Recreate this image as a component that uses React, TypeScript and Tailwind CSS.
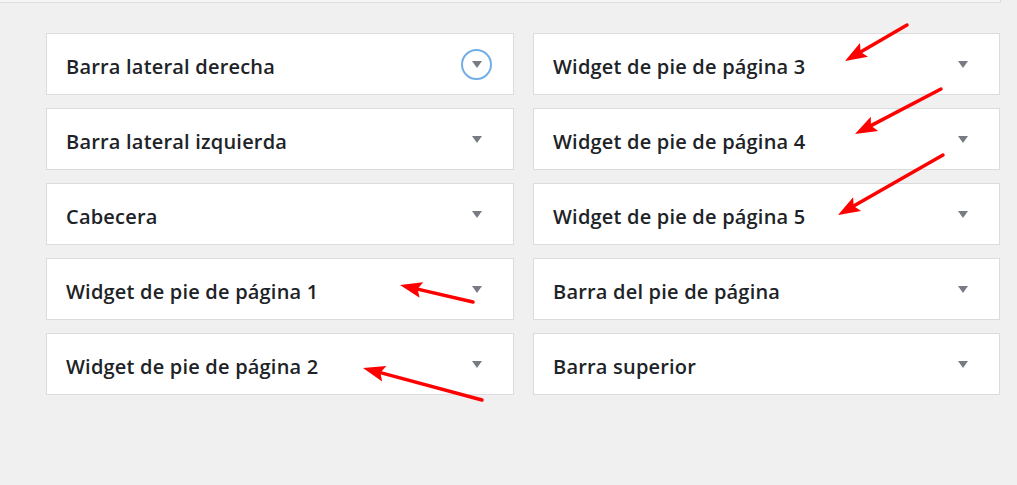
import React from "react";

const left = [
  "Barra lateral derecha",
  "Barra lateral izquierda",
  "Cabecera",
  "Widget de pie de página 1",
  "Widget de pie de página 2",
];
const right = [
  "Widget de pie de página 3",
  "Widget de pie de página 4",
  "Widget de pie de página 5",
  "Barra del pie de página",
  "Barra superior",
];

function Tri() {
  return (
    <svg width="10" height="7" viewBox="0 0 10 7" className="block">
      <path d="M0 0 L10 0 L5 7 Z" fill="#787c82" />
    </svg>
  );
}

function Card({ title, focus }: { title: string; focus?: boolean }) {
  return (
    <div className="h-[62px] bg-white border border-[#dcdcde] flex items-center justify-between pl-[19px] pr-[29px]">
      <span
        className="pt-[5px] text-[20px] font-semibold text-[#1d2327] tracking-[0.2px]"
        style={{ fontFamily: '"Open Sans", "Noto Sans", sans-serif' }}
      >
        {title}
      </span>
      <div className="w-[15px] flex justify-center">
        {focus ? (
          <div className="shrink-0 w-[31px] h-[31px] rounded-full border-2 border-[#72aee6] flex items-center justify-center">
            <Tri />
          </div>
        ) : (
          <Tri />
        )}
      </div>
    </div>
  );
}

const arrows: [number, number, number, number][] = [
  [907, 25, 845, 61],
  [941, 89, 855, 134],
  [943, 155, 838, 215],
  [473, 302, 400, 285],
  [482, 400, 363, 368],
];

function Arrow({ a }: { a: [number, number, number, number] }) {
  const [x1, y1, x2, y2] = a;
  const dx = x2 - x1;
  const dy = y2 - y1;
  const len = Math.hypot(dx, dy);
  const ux = dx / len;
  const uy = dy / len;
  const hl = 22;
  const hw = 8;
  const bx = x2 - ux * hl;
  const by = y2 - uy * hl;
  const px = -uy;
  const py = ux;
  const pts = `${x2},${y2} ${bx + px * hw},${by + py * hw} ${bx + ux * 4},${by + uy * 4} ${bx - px * hw},${by - py * hw}`;
  return (
    <g>
      <line x1={x1} y1={y1} x2={bx + ux * 4} y2={by + uy * 4} stroke="#ff0000" strokeWidth="3.5" strokeLinecap="round" />
      <polygon points={pts} fill="#ff0000" />
    </g>
  );
}

export default function App() {
  return (
    <div className="relative w-[1017px] h-[485px] bg-[#f0f0f0] overflow-hidden">
      <div className="w-[1001px] h-[3px] bg-[#f5f5f5] border-b border-r border-[#dedede]" />
      <div className="pl-[46px] pt-[30px] w-[1001px]">
        <div className="grid grid-cols-[468px_467px] gap-x-[19px] gap-y-[13px]">
          {left.map((l, i) => (
            <React.Fragment key={i}>
              <Card title={l} focus={i === 0} />
              <Card title={right[i]} />
            </React.Fragment>
          ))}
        </div>
      </div>
      <svg className="absolute inset-0 pointer-events-none" width="1017" height="485">
        {arrows.map((a, i) => (
          <Arrow key={i} a={a} />
        ))}
      </svg>
    </div>
  );
}
